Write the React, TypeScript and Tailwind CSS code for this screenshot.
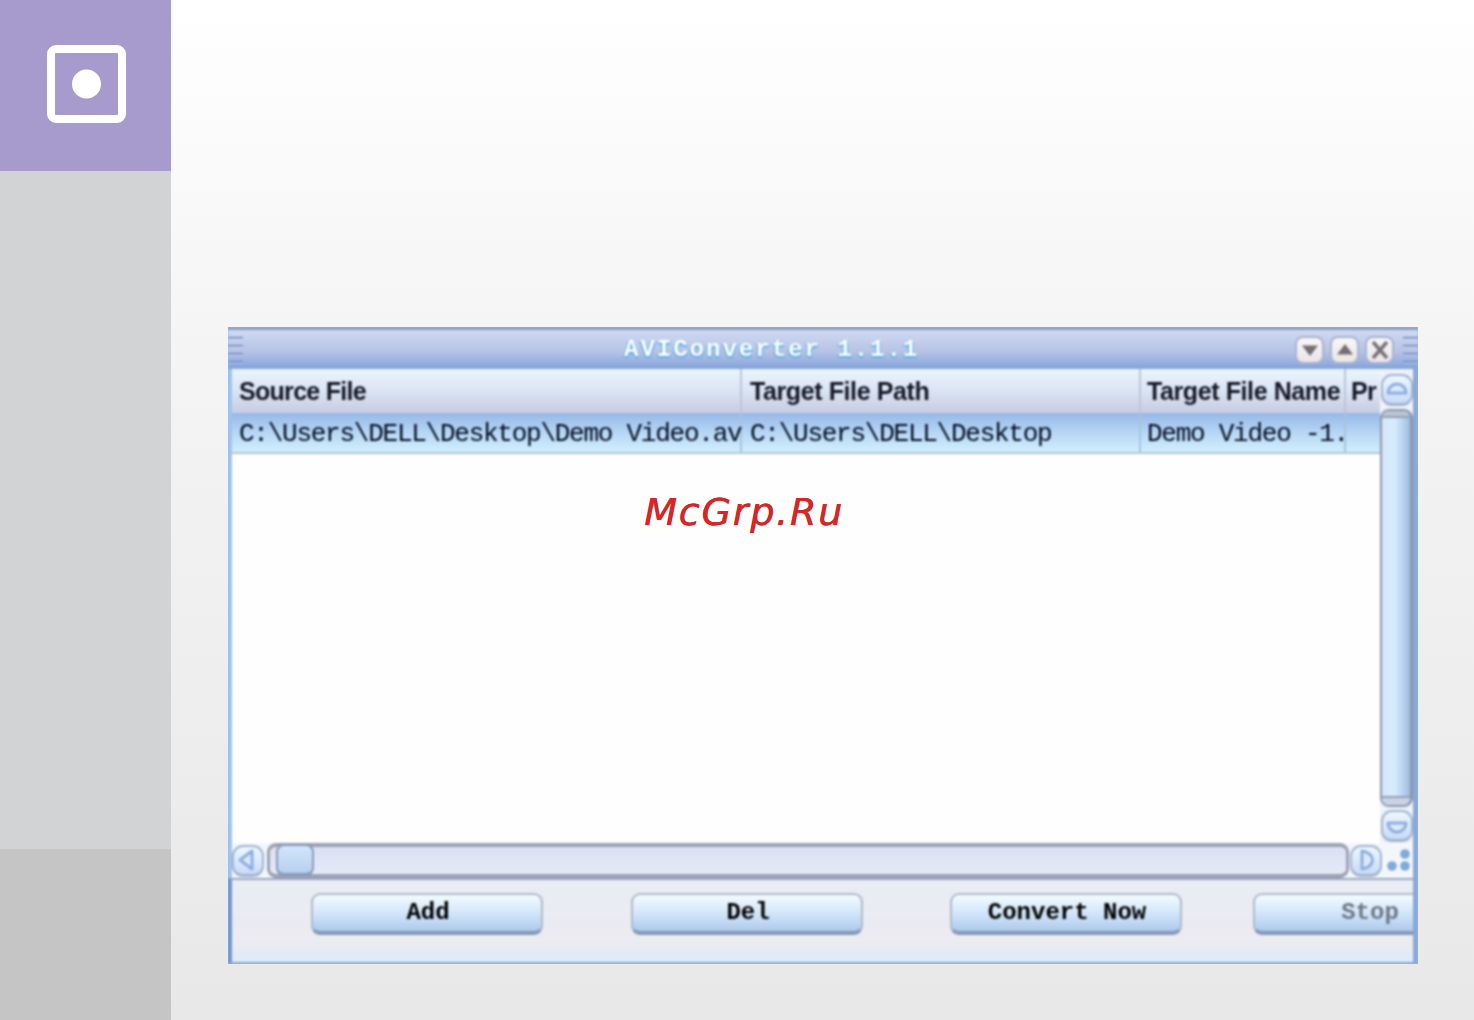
import type { ReactNode } from 'react'
import clsx from 'clsx'

const columns = [
  { title: 'Source File', value: 'C:\\Users\\DELL\\Desktop\\Demo Video.av', width: 'w-[510px]', pad: 'pl-[7px]', tracking: 'tracking-[-0.7px]' },
  { title: 'Target File Path', value: 'C:\\Users\\DELL\\Desktop', width: 'w-[399px]', pad: 'pl-[8px]', tracking: 'tracking-[-0.4px]' },
  { title: 'Target File Name', value: 'Demo Video -1.', width: 'w-[205px]', pad: 'pl-[6px]', tracking: 'tracking-[-0.4px]' },
  { title: 'Pr', value: '', width: 'w-[34px]', pad: 'pl-[5px]', tracking: 'tracking-[-0.7px]' },
]

function Grip() {
  return (
    <div className="flex w-[15px] flex-col gap-[6px] pt-[7px]">
      {[0, 1, 2, 3].map((i) => (
        <div key={i} className="h-[2px] border-t border-[#5f78b2] bg-[#b5c6ec]" />
      ))}
    </div>
  )
}

function TitleButton({ children }: { children: ReactNode }) {
  return (
    <button
      type="button"
      className="flex h-[28px] w-[29px] items-center justify-center rounded-[8px] border-2 border-[#a8b2d0] bg-linear-to-b from-[#f8f7f7] to-[#ebe5e8]"
    >
      <svg viewBox="0 0 24 24" className="h-6 w-6 shrink-0">
        {children}
      </svg>
    </button>
  )
}

function TitleBar() {
  return (
    <div className="flex h-[42px] shrink-0 border-t-[3px] border-[#8b9fbd] bg-linear-to-b from-[#cfdaf3] via-[#b7c3e5] via-55% to-[#82a3dc]">
      <Grip />
      <div className="flex-1 pl-[381px] pt-[5px]">
        <span className="whitespace-pre font-['Liberation_Mono',monospace] text-[24px] leading-[30px] font-bold tracking-[2px] text-white [text-shadow:-1px_1px_1px_#4aa6e2,1px_2px_1px_#68b4e8]">
          AVIConverter 1.1.1
        </span>
      </div>
      <div className="flex gap-[6px] pt-[6px] pr-[9px]">
        <TitleButton>
          <path d="M4 7.500h16L12 18z" fill="#776d72" />
        </TitleButton>
        <TitleButton>
          <path d="M4 16.500h16L12 6z" fill="#776d72" />
        </TitleButton>
        <TitleButton>
          <path d="M5 4l14 16M19 4L5 20" fill="none" stroke="#777477" strokeWidth="3.500" />
        </TitleButton>
      </div>
      <Grip />
    </div>
  )
}

function HeaderRow() {
  return (
    <div className="flex h-[44px] shrink-0 bg-linear-to-b from-[#e9f6fb] via-[#dce6f6] via-45% to-[#c7cde2]">
      {columns.map((c) => (
        <div key={c.title} className={clsx('border-r-2 border-[#bdc5d6] last:border-r-0', c.width, c.pad)}>
          <span
            className={clsx(
              "block whitespace-nowrap font-['Liberation_Sans',Arial,sans-serif] text-[25px] leading-[44px] font-bold text-[#151826]",
              c.tracking,
            )}
          >
            {c.title}
          </span>
        </div>
      ))}
    </div>
  )
}

function FileRow() {
  return (
    <div className="flex h-[41px] shrink-0 border-b-2 border-[#b3c7d2] bg-linear-to-b from-[#95b8e6] via-[#b7d6f5] via-50% to-[#d1effd]">
      {columns.map((c) => (
        <div key={c.title} className={clsx('border-r-2 border-[#a9c3de] last:border-r-0', c.width, c.pad)}>
          <div className="whitespace-pre font-['Liberation_Mono',monospace] text-[26px] leading-[43px] tracking-[-1.25px] text-[#000c20]">
            {c.value}
          </div>
        </div>
      ))}
    </div>
  )
}

function ScrollButton({ d }: { d: string }) {
  return (
    <button
      type="button"
      className="flex h-[32px] w-[32px] shrink-0 items-center justify-center rounded-[11px] border-2 border-b-[3px] border-[#a3b4cf] bg-linear-to-b from-[#edf8ff] to-[#c8daf7]"
    >
      <svg viewBox="0 0 24 24" className="h-6 w-6 shrink-0">
        <path d={d} fill="#dceaff" stroke="#8faee0" strokeWidth="3" strokeLinejoin="round" />
      </svg>
    </button>
  )
}

function VerticalScroll() {
  return (
    <div className="flex w-[33px] shrink-0 flex-col items-center bg-[#edf2fb] pt-[5px]">
      <ScrollButton d="M3 15a9 9 0 0 1 18 0z" />
      <div className="mt-[3px] flex h-[398px] w-full flex-col rounded-[9px] border-2 border-r-[3px] border-[#8b98af] bg-linear-to-r from-[#d5e6f8] via-[#d7edfc] via-45% to-[#9fbbe3]">
        <div className="h-[7px] rounded-t-[7px] border-b-2 border-[#929fb5] bg-[#bcc4d2]" />
        <div className="flex-1" />
        <div className="h-[9px] rounded-b-[7px] border-t-2 border-[#929fb5] bg-[#c9d3e4]" />
      </div>
      <div className="pt-[3px]">
        <ScrollButton d="M3 9h18a9 9 0 0 1-18 0z" />
      </div>
    </div>
  )
}

function HorizontalScroll() {
  return (
    <div className="flex h-[35px] shrink-0 items-center bg-[#f3f7fc]">
      <ScrollButton d="M16 3v18L4 12z" />
      <div className="ml-[3px] flex h-full w-[1082px] rounded-[9px] border-x-[3px] border-t-4 border-b-4 border-[#9ca1b6] bg-linear-to-b from-[#dce1f2] to-[#e5eaf9] pl-[6px]">
        <div className="-mt-[3px] h-[32px] w-[38px] rounded-[8px] border-2 border-b-[3px] border-[#8a9bb8] bg-linear-to-b from-[#d3e7fb] to-[#b7d0f1]" />
      </div>
      <div className="ml-[1px]">
        <ScrollButton d="M8 3v18c14-2 14-16 0-18z" />
      </div>
      <svg viewBox="0 0 28 28" className="ml-[2px] h-7 w-7 fill-[#82a9da]">
        <circle cx="21" cy="7" r="4.800" />
        <circle cx="8" cy="19" r="4.800" />
        <circle cx="21" cy="19" r="4.800" />
      </svg>
    </div>
  )
}

function ActionButton({ label, disabled, className }: { label: string; disabled?: boolean; className?: string }) {
  return (
    <button
      type="button"
      disabled={disabled}
      className={clsx(
        "h-[42px] w-[232px] shrink-0 rounded-[9px] border-2 border-b-4 border-[#b0b9ca] border-b-[#8798b7] bg-linear-to-b from-[#f4fbff] via-[#cfe4f9] via-55% to-[#adc9ec] pl-[2px] font-['Liberation_Mono',monospace] text-[24px] leading-[34px] font-bold",
        disabled ? 'text-[#6f7886]' : 'text-black',
        className,
      )}
    >
      {label}
    </button>
  )
}

function ConverterWindow() {
  return (
    <div className="h-[637px] w-[1190px] overflow-hidden bg-[#9dbbe4]">
      <div className="flex h-full flex-col blur-[0.8px]">
        <TitleBar />
        <div className="flex h-[474px] shrink-0 border-r-[5px] border-l-4 border-r-[#86a9d9] border-l-[#9fc3ed]">
          <div className="flex w-[1148px] shrink-0 flex-col bg-[#fefefe]">
            <HeaderRow />
            <FileRow />
          </div>
          <VerticalScroll />
        </div>
        <div className="border-r-[5px] border-l-4 border-r-[#86a9d9] border-l-[#9fc3ed]">
          <HorizontalScroll />
        </div>
        <div className="flex flex-1 overflow-hidden border-t-2 border-r-[5px] border-b-2 border-l-4 border-t-[#9aa6bf] border-r-[#86a9d9] border-b-[#8ca9d2] border-l-[#7395c9] bg-linear-to-b from-[#eaedf4] via-[#ebebf1] via-75% to-[#dfeafa] pt-[13px] pl-[79px]">
          <ActionButton label="Add" />
          <ActionButton label="Del" className="ml-[88px]" />
          <ActionButton label="Convert Now" className="ml-[87px]" />
          <ActionButton label="Stop" disabled className="ml-[71px]" />
        </div>
      </div>
    </div>
  )
}

export default function App() {
  return (
    <div className="flex h-[1020px] w-[1474px] overflow-hidden bg-linear-to-b from-white via-[#f4f4f4] via-35% to-[#e8e8e8]">
      <aside className="flex w-[171px] shrink-0 flex-col bg-[#d1d3d4]">
        <div className="flex h-[171px] items-center justify-center bg-[#a79bcd] pb-[3px] pl-[2px]">
          <svg viewBox="0 0 79 78" className="h-[78px] w-[79px]">
            <rect x="4" y="4" width="71" height="70" rx="5" fill="none" stroke="#fff" strokeWidth="8" />
            <circle cx="39.500" cy="39" r="14.500" fill="#fff" />
          </svg>
        </div>
        <div className="flex-1" />
        <div className="h-[171px] bg-[#c5c5c5]" />
      </aside>
      <main className="relative pt-[327px] pl-[57px]">
        <ConverterWindow />
        <span className="absolute top-[489px] left-[473px] font-['DejaVu_Sans',sans-serif] text-[38px] leading-[46px] tracking-[1.8px] text-[#dc2426] italic [text-shadow:0.5px_0_0_#5a1518]">
          McGrp.Ru
        </span>
      </main>
    </div>
  )
}
